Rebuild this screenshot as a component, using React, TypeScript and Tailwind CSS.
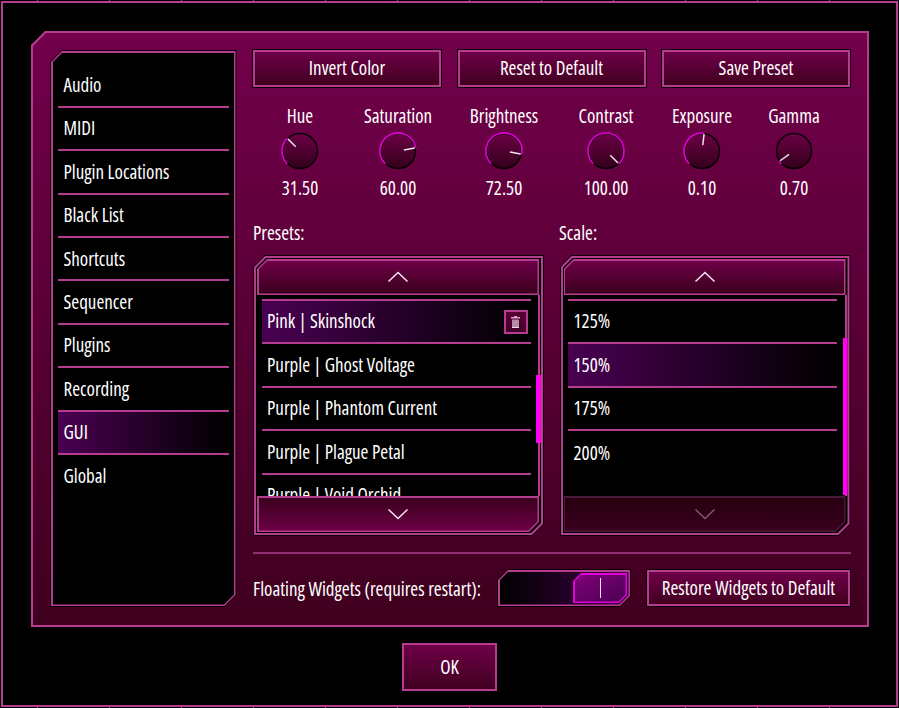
import React from "react";

function Chevron({ up, dim }: { up?: boolean; dim?: boolean }) {
  return (
    <svg width="22" height="12" viewBox="0 0 22 12" fill="none">
      <path
        d={up ? "M1.5 10.5 L11 1.5 L20.5 10.5" : "M1.5 1.5 L11 10.5 L20.5 1.5"}
        stroke={dim ? "#7d5a72" : "#f6e6f0"}
        strokeWidth="1.5"
      />
    </svg>
  );
}

function polar(cx: number, cy: number, r: number, deg: number) {
  const a = (deg * Math.PI) / 180;
  return [cx + r * Math.sin(a), cy - r * Math.cos(a)];
}

function Knob({ label, value, angle, w }: { label: string; value: string; angle: number; w: string }) {
  const [x0, y0] = polar(20, 20, 18, -135);
  const [x1, y1] = polar(20, 20, 18, angle);
  const [p0x, p0y] = polar(20, 20, 6, angle);
  const [p1x, p1y] = polar(20, 20, 17, angle);
  const large = angle + 135 > 180 ? 1 : 0;
  const id = "k" + label;
  return (
    <div className={"flex flex-col items-center " + w}>
      <div className="h-6 leading-6 text-white">{label}</div>
      <svg width="40" height="40" viewBox="0 0 40 40" className="mt-[3px] block">
        <defs>
          <linearGradient id={id} x1="0" y1="0" x2="0" y2="1">
            <stop offset="0" stopColor="#6b0046" />
            <stop offset="1" stopColor="#33001a" />
          </linearGradient>
        </defs>
        <circle cx="20" cy="20" r="17.5" fill={`url(#${id})`} stroke="#0a0006" strokeWidth="1.5" />
        <path d={`M${x0} ${y0} A18 18 0 ${large} 1 ${x1} ${y1}`} fill="none" stroke="#e000d8" strokeWidth="1.6" />
        <line x1={p0x} y1={p0y} x2={p1x} y2={p1y} stroke="#f0e4ea" strokeWidth="1.5" />
      </svg>
      <div className="mt-[5px] h-6 leading-6 text-white">{value}</div>
    </div>
  );
}

function TopButton({ children }: { children: React.ReactNode }) {
  return (
    <button className="h-[39px] w-[190px] bg-[#0a0006] p-px">
      <span className="flex h-full w-full items-center justify-center border-2 border-[#b53c8f] bg-linear-to-b/srgb from-[#6e0048] to-[#40001f] text-white">
        {children}
      </span>
    </button>
  );
}

function Row({ label, selected, del }: { label: string; selected?: boolean; del?: boolean }) {
  return (
    <div
      className={
        "flex h-[43.4px] shrink-0 items-center justify-between border-b-2 border-[#b53c8f] pl-[5.5px] pr-[3px] text-white " +
        (selected ? "bg-linear-to-r/srgb from-[#4a0052] to-black" : "")
      }
    >
      <span>{label}</span>
      {del && (
        <span className="flex h-6 w-6 items-center justify-center border-2 border-[#b53c8f] bg-linear-to-b/srgb from-[#5a0036] to-[#420028]">
          <svg width="9" height="12" viewBox="0 0 9 12">
            <rect x="3" y="0" width="3" height="1.5" fill="#d8a8c4" />
            <rect x="0" y="1" width="9" height="1.5" fill="#d8a8c4" />
            <path d="M1 3.5 H8 V10.5 H1 Z" fill="#b98aa6" />
            <rect x="1" y="10.5" width="7" height="1.5" fill="#f0dce8" />
          </svg>
        </span>
      )}
    </div>
  );
}

function ListBox({ children, thumb, downDim }: { children: React.ReactNode; thumb: string; downDim?: boolean }) {
  return (
    <div className="h-[281px] w-[291px] bg-[#0a0006] p-px [clip-path:polygon(12px_0,100%_0,100%_calc(100%-12px),calc(100%-12px)_100%,0_100%,0_12px)]">
      <div className="h-full w-full bg-[#b53c8f] p-[2px] [clip-path:polygon(11px_0,100%_0,100%_calc(100%-11px),calc(100%-11px)_100%,0_100%,0_11px)]">
        <div className="flex h-full w-full flex-col bg-black [clip-path:polygon(10px_0,100%_0,100%_calc(100%-10px),calc(100%-10px)_100%,0_100%,0_10px)]">
          <div className="ml-px mr-[2px] mt-px h-[36px] shrink-0 bg-[#b53c8f] p-[1.5px] [clip-path:polygon(10px_0,100%_0,100%_100%,0_100%,0_10px)]">
            <div className="flex h-full w-full items-center justify-center bg-linear-to-b/srgb from-[#6e0048] to-[#3a001c] [clip-path:polygon(9px_0,100%_0,100%_100%,0_100%,0_9px)]">
              <Chevron up />
            </div>
          </div>
          <div className="relative min-h-0 flex-1 overflow-hidden">
            <div className="absolute bottom-0 right-px top-0 w-[2px] bg-[#b53c8f]" />
            <div className={"absolute right-0 w-[5px] bg-[#ff00f0] " + thumb} />
            <div className="flex h-full flex-col pl-[5.5px] pr-[10.5px] pt-[4px]">
              <div className="h-[2px] shrink-0 bg-[#b53c8f]" />
              {children}
            </div>
          </div>
          {downDim ? (
            <div className="mb-px ml-px mr-[2px] h-[36px] shrink-0 bg-[#4a1a3a] p-[1.5px] [clip-path:polygon(0_0,100%_0,100%_calc(100%-10px),calc(100%-10px)_100%,0_100%)]">
              <div className="flex h-full w-full items-center justify-center bg-linear-to-b/srgb from-[#28000f] to-[#3a001f] [clip-path:polygon(0_0,100%_0,100%_calc(100%-9px),calc(100%-9px)_100%,0_100%)]">
                <Chevron dim />
              </div>
            </div>
          ) : (
            <div className="mb-px ml-px mr-[2px] h-[36px] shrink-0 bg-[#b53c8f] p-[1.5px] [clip-path:polygon(0_0,100%_0,100%_calc(100%-10px),calc(100%-10px)_100%,0_100%)]">
              <div className="flex h-full w-full items-center justify-center bg-linear-to-b/srgb from-[#3a001c] to-[#6e0048] [clip-path:polygon(0_0,100%_0,100%_calc(100%-9px),calc(100%-9px)_100%,0_100%)]">
                <Chevron />
              </div>
            </div>
          )}
        </div>
      </div>
    </div>
  );
}

const NAV = ["Audio", "MIDI", "Plugin Locations", "Black List", "Shortcuts", "Sequencer", "Plugins", "Recording", "GUI", "Global"];

export default function App() {
  return (
    <div className="relative h-[708px] w-[899px] overflow-hidden bg-black p-px font-['Open_Sans',sans-serif] text-[19px] font-medium font-stretch-[75%]">
      <div className="absolute left-[37px] right-0 top-0 h-px bg-[repeating-linear-gradient(90deg,#b53c8f_0,#b53c8f_1px,transparent_1px,transparent_72px)]" />
      <div className="absolute bottom-0 left-[37px] right-0 h-px bg-[repeating-linear-gradient(90deg,#b53c8f_0,#b53c8f_1px,transparent_1px,transparent_72px)]" />
      <div className="flex h-full w-full flex-col border-2 border-[#b53c8f]">
        {/* main panel */}
        <div className="ml-[28px] mt-[28px] h-[596px] w-[838px] shrink-0 bg-[#b53c8f] p-[2px] [clip-path:polygon(14px_0,100%_0,100%_100%,0_100%,0_14px)]">
          <div className="flex h-full w-full gap-[16.5px] bg-linear-to-b/srgb from-[#72004b] to-[#3f001e] pb-[18px] pl-[17px] pr-[16px] pt-[17px] [clip-path:polygon(13px_0,100%_0,100%_100%,0_100%,0_13px)]">
            {/* nav */}
            <div className="h-full w-[186.5px] shrink-0 bg-[#0a0006] p-px [clip-path:polygon(12px_0,100%_0,100%_calc(100%-12px),calc(100%-12px)_100%,0_100%,0_12px)]">
              <div className="h-full w-full bg-[#b53c8f] p-[1.5px] [clip-path:polygon(11px_0,100%_0,100%_calc(100%-11px),calc(100%-11px)_100%,0_100%,0_11px)]">
                <div className="flex h-full w-full flex-col bg-black px-[5px] pt-[12px] [clip-path:polygon(10px_0,100%_0,100%_calc(100%-10px),calc(100%-10px)_100%,0_100%,0_10px)]">
                  {NAV.map((n) => (
                    <div
                      key={n}
                      className={
                        "flex h-[43.4px] shrink-0 items-center pl-[6px] text-white " +
                        (n !== "Global" ? "border-b-2 border-[#b53c8f] " : "") +
                        (n === "GUI" ? "bg-linear-to-r/srgb from-[#4a0052] to-black" : "")
                      }
                    >
                      {n}
                    </div>
                  ))}
                </div>
              </div>
            </div>

            {/* right */}
            <div className="flex min-w-0 flex-1 flex-col">
              <div className="-ml-px -mt-px flex justify-between">
                <TopButton>Invert Color</TopButton>
                <TopButton>Reset to Default</TopButton>
                <TopButton>Save Preset</TopButton>
              </div>

              <div className="mt-[16px] flex">
                <Knob label="Hue" value="31.50" angle={-45} w="w-[94px]" />
                <Knob label="Saturation" value="60.00" angle={80} w="w-[102px]" />
                <Knob label="Brightness" value="72.50" angle={100} w="w-[110px]" />
                <Knob label="Contrast" value="100.00" angle={135} w="w-[94px]" />
                <Knob label="Exposure" value="0.10" angle={7} w="w-[98px]" />
                <Knob label="Gamma" value="0.70" angle={-125} w="w-[86px]" />
              </div>

              <div className="mt-[21px] flex h-6 leading-6 text-white">
                <div className="w-[306px]">Presets:</div>
                <div>Scale:</div>
              </div>

              <div className="mt-[10px] flex gap-[15.5px]">
                <ListBox thumb="top-[80px] h-[68px]">
                  <Row label="Pink | Skinshock" selected del />
                  <Row label="Purple | Ghost Voltage" />
                  <Row label="Purple | Phantom Current" />
                  <Row label="Purple | Plague Petal" />
                  <Row label="Purple | Void Orchid" />
                </ListBox>
                <ListBox thumb="top-[43px] h-[157px]" downDim>
                  <Row label="125%" />
                  <Row label="150%" selected />
                  <Row label="175%" />
                  <div className="flex h-[43.4px] shrink-0 items-center pl-[5.5px] text-white">200%</div>
                </ListBox>
              </div>

              <div className="mt-[16px] h-[2px] w-full bg-[#8f2f72]" />

              <div className="mt-[15px] flex h-[38px] items-center">
                <div className="w-[244px] pt-[3px] text-white">Floating Widgets (requires restart):</div>
                <div className="h-[38px] w-[134px] bg-[#0a0006] p-px [clip-path:polygon(11px_0,100%_0,100%_calc(100%-11px),calc(100%-11px)_100%,0_100%,0_11px)]">
                  <div className="h-full w-full bg-[#b53c8f] p-[1.5px] [clip-path:polygon(10px_0,100%_0,100%_calc(100%-10px),calc(100%-10px)_100%,0_100%,0_10px)]">
                    <div className="flex h-full w-full justify-end bg-linear-to-r/srgb from-black to-[#45004a] p-[1.5px] [clip-path:polygon(9px_0,100%_0,100%_calc(100%-9px),calc(100%-9px)_100%,0_100%,0_9px)]">
                      <div className="h-full w-[54px] bg-[#e000d8] p-[1.5px] [clip-path:polygon(8px_0,100%_0,100%_calc(100%-8px),calc(100%-8px)_100%,0_100%,0_8px)]">
                        <div className="flex h-full w-full items-center justify-center bg-linear-to-br/srgb from-[#80007a] to-[#4a0052] [clip-path:polygon(7px_0,100%_0,100%_calc(100%-7px),calc(100%-7px)_100%,0_100%,0_7px)]">
                          <div className="h-5 w-px bg-[#f4e4f0]" />
                        </div>
                      </div>
                    </div>
                  </div>
                </div>
                <button className="ml-[15px] h-[38px] w-[205px] bg-[#0a0006] p-px">
                  <span className="flex h-full w-full items-center justify-center border-2 border-[#b53c8f] bg-linear-to-b/srgb from-[#6e0048] to-[#40001f] pt-px text-white">
                    Restore Widgets to Default
                  </span>
                </button>
              </div>
            </div>
          </div>
        </div>

        {/* OK */}
        <button className="ml-[399px] mt-[16px] h-[48px] w-[95px] border-2 border-[#b53c8f] bg-linear-to-b/srgb from-[#6e0048] to-[#40001f] text-white">
          OK
        </button>
      </div>
    </div>
  );
}
